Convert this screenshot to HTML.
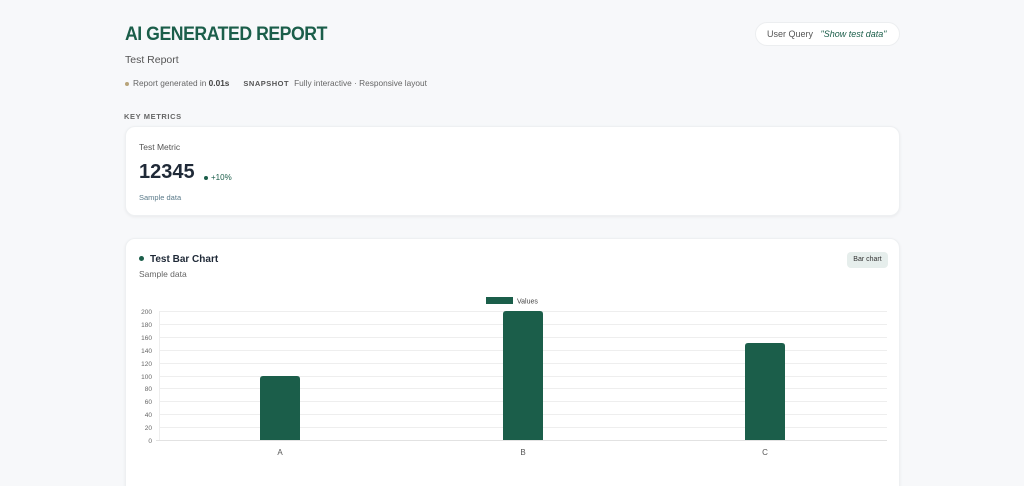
<!DOCTYPE html>
<html><head><meta charset="utf-8"><style>
*{box-sizing:border-box;margin:0;padding:0}
html,body{width:1024px;height:486px;overflow:hidden}
body{background:#f7f8fa;font-family:"Liberation Sans",sans-serif;position:relative;color:#374151}
.abs{position:absolute}
h1{position:absolute;left:125px;top:24px;font-size:19px;font-weight:700;color:#1b5e4a;letter-spacing:-0.5px;transform:scaleX(0.93);transform-origin:left}
.card{position:absolute;left:125px;width:775px;background:#fff;border-radius:10px;box-shadow:0 1px 3px rgba(0,0,0,0.06);border:1px solid #eef0f2}
svg text{font-family:"Liberation Sans",sans-serif}
</style></head><body>
<h1>AI GENERATED REPORT</h1>
<div class="abs" style="left:125px;top:54px;font-size:10.5px;color:#555">Test Report</div>
<div class="abs" style="left:125px;top:78px;font-size:8.3px;color:#666;white-space:nowrap"><span style="display:inline-block;width:4px;height:4px;border-radius:50%;background:#b8a47a;vertical-align:middle;margin-right:4px"></span>Report generated in <b style="color:#444">0.01s</b><span style="margin-left:14px;font-weight:700;letter-spacing:0.5px;font-size:7.5px;color:#555">SNAPSHOT</span><span style="margin-left:5px">Fully interactive · Responsive layout</span></div>
<div class="abs" style="left:755px;top:22px;width:145px;height:24px;background:#fff;border:1px solid #eceef0;border-radius:12px;font-size:9px;line-height:22px;padding-left:11px;color:#555;white-space:nowrap">User Query <i style="margin-left:5px;color:#1b5e4a">"Show test data"</i></div>
<div class="abs" style="left:124px;top:112px;font-size:7.5px;font-weight:700;letter-spacing:0.6px;color:#666">KEY METRICS</div>
<div class="card" style="top:126px;height:90px">
<div class="abs" style="left:13px;top:15px;font-size:8.5px;color:#555">Test Metric</div>
<div class="abs" style="left:13px;top:34px;font-size:20px;font-weight:700;color:#1f2937">12345</div>
<div class="abs" style="left:78px;top:46px;font-size:8px;color:#1b5e4a"><span style="display:inline-block;width:4px;height:4px;border-radius:50%;background:#1b5e4a;vertical-align:middle;margin-right:3px"></span>+10%</div>
<div class="abs" style="left:13px;top:66px;font-size:7.5px;color:#5a7a8a">Sample data</div>
</div>
<div class="card" style="top:238px;height:260px">
<div class="abs" style="left:13px;top:15px;font-size:10px;font-weight:700;color:#1f2937"><span style="display:inline-block;width:5px;height:5px;border-radius:50%;background:#1b5e4a;vertical-align:middle;margin-right:6px;position:relative;top:-1px"></span>Test Bar Chart</div>
<div class="abs" style="left:13px;top:30px;font-size:8.5px;color:#666">Sample data</div>
<div class="abs" style="left:721px;top:13px;width:41px;height:16px;background:#e6eeec;border-radius:4px;font-size:7px;line-height:16px;text-align:center;color:#333">Bar chart</div>
</div>
<svg class="abs" style="left:0;top:0" width="1024" height="486">
<g stroke="#eeeeee" stroke-width="1">
<line x1="160" x2="887" y1="311.5" y2="311.5"/><line x1="160" x2="887" y1="324.5" y2="324.5"/><line x1="160" x2="887" y1="337.5" y2="337.5"/><line x1="160" x2="887" y1="350.5" y2="350.5"/><line x1="160" x2="887" y1="363.5" y2="363.5"/><line x1="160" x2="887" y1="376.5" y2="376.5"/><line x1="160" x2="887" y1="388.5" y2="388.5"/><line x1="160" x2="887" y1="401.5" y2="401.5"/><line x1="160" x2="887" y1="414.5" y2="414.5"/><line x1="160" x2="887" y1="427.5" y2="427.5"/>
<line x1="159.5" x2="159.5" y1="311" y2="441"/>
</g>
<line x1="156" x2="887" y1="440.5" y2="440.5" stroke="#e2e2e2"/>
<g font-size="6.5" fill="#666" text-anchor="end">
<text x="152" y="314">200</text><text x="152" y="327">180</text><text x="152" y="340">160</text><text x="152" y="353">140</text><text x="152" y="366">120</text><text x="152" y="379">100</text><text x="152" y="391">80</text><text x="152" y="404">60</text><text x="152" y="417">40</text><text x="152" y="430">20</text><text x="152" y="443">0</text>
</g>
<g fill="#1b5e4a">
<path d="M260 440V379q0-3 3-3h34q3 0 3 3V440z"/>
<path d="M503 440V314q0-3 3-3h34q3 0 3 3V440z"/>
<path d="M745 440V346q0-3 3-3h34q3 0 3 3V440z"/>
<rect x="486" y="297" width="27" height="7"/>
</g>
<text x="517" y="303.5" font-size="7" fill="#444">Values</text>
<g font-size="8" fill="#555" text-anchor="middle"><text x="280" y="455">A</text><text x="523" y="455">B</text><text x="765" y="455">C</text></g>
</svg>
</body></html>
